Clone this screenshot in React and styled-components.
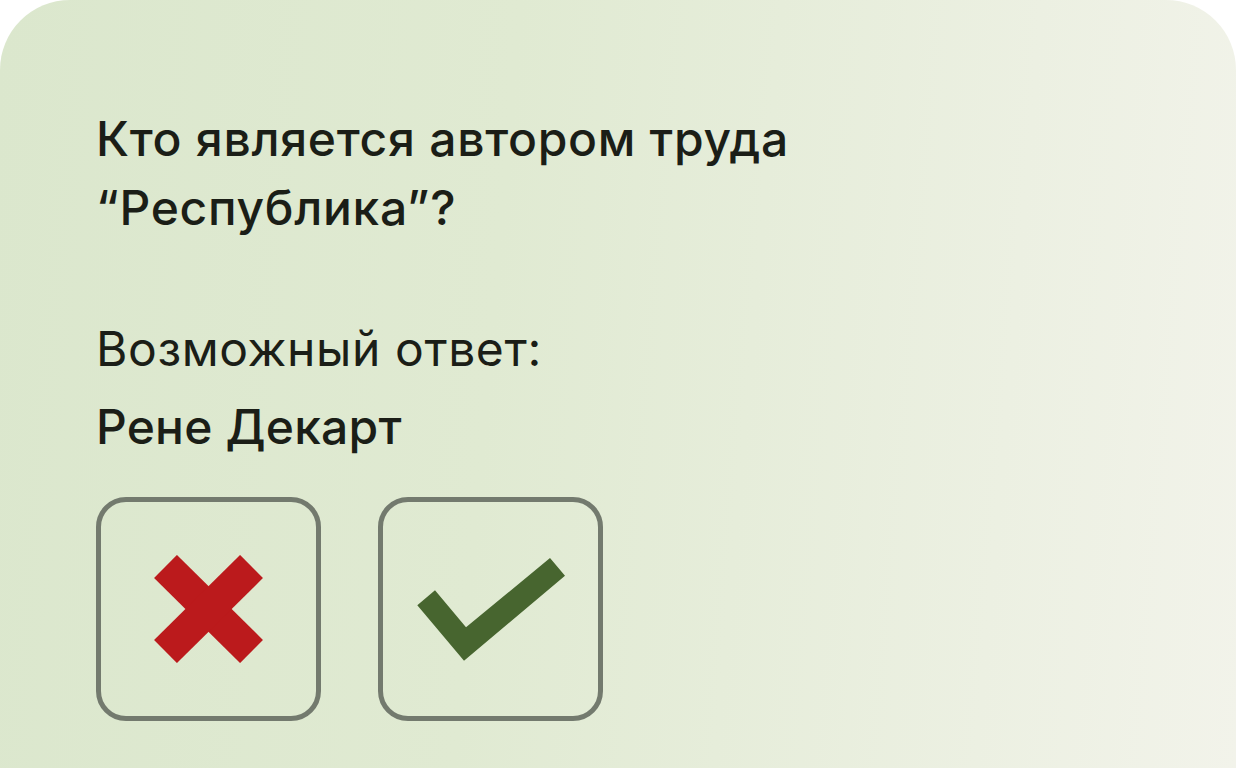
import React from "react";
import styled, { createGlobalStyle } from "styled-components";

const GlobalStyle = createGlobalStyle`
  html, body {
    margin: 0;
    padding: 0;
    background: #ffffff;
  }
  body {
    font-family: Inter, "Noto Sans", "Liberation Sans", sans-serif;
    -webkit-font-smoothing: antialiased;
  }
`;

function CrossIcon() {
  return (
    <svg width="109" height="108" viewBox="0 0 109 108">
      <g stroke="#bb1a1c" strokeWidth="32.5" strokeLinecap="butt">
        <line x1="11.5" y1="11.5" x2="97.5" y2="96.5" />
        <line x1="97.5" y1="11.5" x2="11.5" y2="96.5" />
      </g>
    </svg>
  );
}

function CheckIcon() {
  return (
    <svg width="148" height="103" viewBox="39 62 148 103">
      <polygon
        fill="#47652f"
        points="39.3,109.3 57,94.3 88,131.3 172,62 187,79.7 86,164.7"
      />
    </svg>
  );
}

export default function App() {
  return (
    <>
      <GlobalStyle />
      <Card>
        <Question>
          Кто является автором труда
          <br />
          “Республика”?
        </Question>
        <Label>Возможный ответ:</Label>
        <Answer>Рене Декарт</Answer>
        <Actions>
          <ChoiceButton aria-label="Неверно">
            <CrossIcon />
          </ChoiceButton>
          <ChoiceButton aria-label="Верно">
            <CheckIcon />
          </ChoiceButton>
        </Actions>
      </Card>
    </>
  );
}

const Card = styled.section`
  box-sizing: border-box;
  width: 100%;
  min-height: 100vh;
  padding: 104px 96px 0;
  border-radius: 70px 70px 0 0;
  background: linear-gradient(95deg, #dbe7cd 0%, #e0ead2 40%, #f2f3ea 100%);
  color: #1b1e17;
  display: flex;
  flex-direction: column;
`;

const Question = styled.h1`
  margin: 0;
  font-size: 48px;
  font-weight: 500;
  line-height: 69px;
  letter-spacing: 0.7px;
`;

const Label = styled.p`
  margin: 72px 0 0;
  font-size: 48px;
  font-weight: 400;
  line-height: 69px;
  letter-spacing: 0.6px;
`;

const Answer = styled.p`
  margin: 9px 0 0;
  font-size: 48px;
  font-weight: 500;
  line-height: 69px;
  letter-spacing: 0.2px;
`;

const Actions = styled.div`
  display: flex;
  gap: 57px;
  margin-top: 36px;
`;

const ChoiceButton = styled.button`
  box-sizing: border-box;
  width: 225px;
  height: 224px;
  padding: 0;
  border: 5px solid #737a6e;
  border-radius: 30px;
  background: transparent;
  display: flex;
  align-items: center;
  justify-content: center;
  cursor: pointer;
`;
